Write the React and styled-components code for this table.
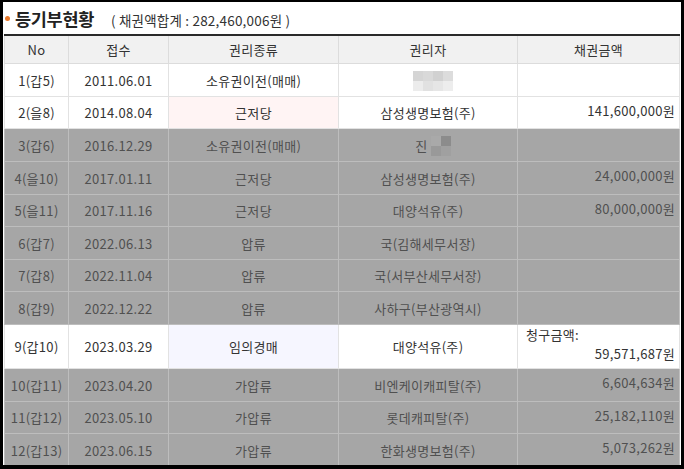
import React from 'react';
import styled, { createGlobalStyle } from 'styled-components';

const GlobalStyle = createGlobalStyle`
    html, body {
        margin: 0;
        padding: 0;
        background: #000;
    }
    body {
        font-family: "Noto Sans CJK KR", "Noto Sans", sans-serif;
        color: #333;
    }
`;

const rows = [
    { no: '1(갑5)', date: '2011.06.01', kind: '소유권이전(매매)', holder: 'blur', amount: '', h: 33 },
    { no: '2(을8)', date: '2014.08.04', kind: '근저당', holder: '삼성생명보험(주)', amount: '141,600,000원', tint: 'pink', h: 32 },
    { no: '3(갑6)', date: '2016.12.29', kind: '소유권이전(매매)', holder: 'jin', amount: '', dim: true, h: 33 },
    { no: '4(을10)', date: '2017.01.11', kind: '근저당', holder: '삼성생명보험(주)', amount: '24,000,000원', dim: true, h: 33 },
    { no: '5(을11)', date: '2017.11.16', kind: '근저당', holder: '대양석유(주)', amount: '80,000,000원', dim: true, h: 32 },
    { no: '6(갑7)', date: '2022.06.13', kind: '압류', holder: '국(김해세무서장)', amount: '', dim: true, h: 33 },
    { no: '7(갑8)', date: '2022.11.04', kind: '압류', holder: '국(서부산세무서장)', amount: '', dim: true, h: 32 },
    { no: '8(갑9)', date: '2022.12.22', kind: '압류', holder: '사하구(부산광역시)', amount: '', dim: true, h: 33 },
    { no: '9(갑10)', date: '2023.03.29', kind: '임의경매', holder: '대양석유(주)', amount: '59,571,687원', claim: true, tint: 'lavender', h: 44 },
    { no: '10(갑11)', date: '2023.04.20', kind: '가압류', holder: '비엔케이캐피탈(주)', amount: '6,604,634원', dim: true, h: 33 },
    { no: '11(갑12)', date: '2023.05.10', kind: '가압류', holder: '롯데캐피탈(주)', amount: '25,182,110원', dim: true, h: 32 },
    { no: '12(갑13)', date: '2023.06.15', kind: '가압류', holder: '한화생명보험(주)', amount: '5,073,262원', dim: true, h: 33 },
];

const tints = { pink: '#fff4f4', lavender: '#f6f6ff' };

const Frame = styled.div`
    margin: 2px 3px 0 3px;
    height: 463px;
    background: #fff;
    overflow: hidden;
`;

const TitleBar = styled.div`
    display: flex;
    align-items: center;
    height: 32px;
    padding-left: 2px;
    padding-top: 1px;
    box-sizing: border-box;
`;

const Bullet = styled.span`
    width: 5px;
    height: 5px;
    border-radius: 50%;
    background: #e8782a;
    margin-right: 5px;
`;

const Title = styled.h2`
    margin: 0;
    font-size: 17.5px;
    font-weight: 700;
    color: #222;
    letter-spacing: -0.3px;
`;

const Sum = styled.span`
    margin-left: 17px;
    font-size: 13.5px;
    letter-spacing: 0.2px;
    color: #333;
    padding-top: 2px;
`;

const Table = styled.table`
    margin-left: 1px;
    width: 676px;
    border-collapse: collapse;
    table-layout: fixed;
    border-top: 2px solid #2a2a2a;
    font-size: 13px;
    letter-spacing: 0.3px;
`;

const Th = styled.th`
    height: 27px;
    padding: 0;
    background: #f1f1f1;
    border: 1px solid #dcdcdc;
    border-top: none;
    font-weight: 400;
    color: #333;
`;

const Row = styled.tr`
    height: ${p => p.$h}px;
    background: ${p => (p.$dim ? '#a6a6a6' : '#fff')};
    color: ${p => (p.$dim ? '#505050' : '#333')};
`;

const Td = styled.td`
    padding: 0 ${p => (p.$right ? 4 : 2)}px 0 2px;
    border: 1px solid ${p => (p.$dim ? '#bdbdbd' : '#e2e2e2')};
    text-align: ${p => (p.$right ? 'right' : 'center')};
    vertical-align: ${p => (p.$top ? 'top' : 'middle')};
    background: ${p => p.$tint || 'transparent'};
    white-space: nowrap;
`;

const Amount = styled.div`
    padding-top: 4px;
`;

const ClaimLabel = styled.div`
    text-align: left;
    padding: 1px 0 0 6px;
    line-height: 18px;
`;

const ClaimValue = styled.div`
    text-align: right;
    line-height: 20px;
`;

const Holder = styled.span`
    display: inline-flex;
    align-items: center;
    vertical-align: middle;
    margin-left: ${p => p.$shift}px;
    gap: ${p => p.$gap || 0}px;
`;

const Mosaic = ({ cells, size = 10 }) => (
    <svg width={cells[0].length * size} height={cells.length * size} style={{ display: 'block' }}>
        {cells.map((r, y) =>
            r.map((c, x) => <rect key={`${x}-${y}`} x={x * size} y={y * size} width={size} height={size} fill={c} />)
        )}
    </svg>
);

const blurA = [
    ['#d5d5d5', '#d9d9d9', '#d1d1d1', '#dcdcdc'],
    ['#ececec', '#e1e1e1', '#e6e6e6', '#ededed'],
];

const blurB = [
    ['#a9a9a9', '#8c8c8c'],
    ['#999999', '#a0a0a0'],
];

const renderHolder = holder => {
    if (holder === 'blur') {
        return (
            <Holder $shift={10}>
                <Mosaic cells={blurA} />
            </Holder>
        );
    }
    if (holder === 'jin') {
        return (
            <Holder $shift={10} $gap={3}>
                진
                <Mosaic cells={blurB} size={10} />
            </Holder>
        );
    }
    return holder;
};

export default function App() {
    return (
        <>
            <GlobalStyle />
            <Frame>
                <TitleBar>
                    <Bullet />
                    <Title>등기부현황</Title>
                    <Sum>( 채권액합계 : 282,460,006원 )</Sum>
                </TitleBar>
                <Table>
                    <colgroup>
                        <col style={{ width: 64 }} />
                        <col style={{ width: 100 }} />
                        <col style={{ width: 170 }} />
                        <col style={{ width: 179 }} />
                        <col />
                    </colgroup>
                    <thead>
                        <tr>
                            <Th>No</Th>
                            <Th>접수</Th>
                            <Th>권리종류</Th>
                            <Th>권리자</Th>
                            <Th>채권금액</Th>
                        </tr>
                    </thead>
                    <tbody>
                        {rows.map(r => (
                            <Row key={r.no} $dim={r.dim} $h={r.h}>
                                <Td $dim={r.dim}>{r.no}</Td>
                                <Td $dim={r.dim}>{r.date}</Td>
                                <Td $dim={r.dim} $tint={tints[r.tint]}>{r.kind}</Td>
                                <Td $dim={r.dim}>{renderHolder(r.holder)}</Td>
                                {r.claim ? (
                                    <Td $dim={r.dim} $right $top>
                                        <ClaimLabel>청구금액:</ClaimLabel>
                                        <ClaimValue>{r.amount}</ClaimValue>
                                    </Td>
                                ) : (
                                    <Td $dim={r.dim} $right $top>
                                        <Amount>{r.amount}</Amount>
                                    </Td>
                                )}
                            </Row>
                        ))}
                    </tbody>
                </Table>
            </Frame>
        </>
    );
}
